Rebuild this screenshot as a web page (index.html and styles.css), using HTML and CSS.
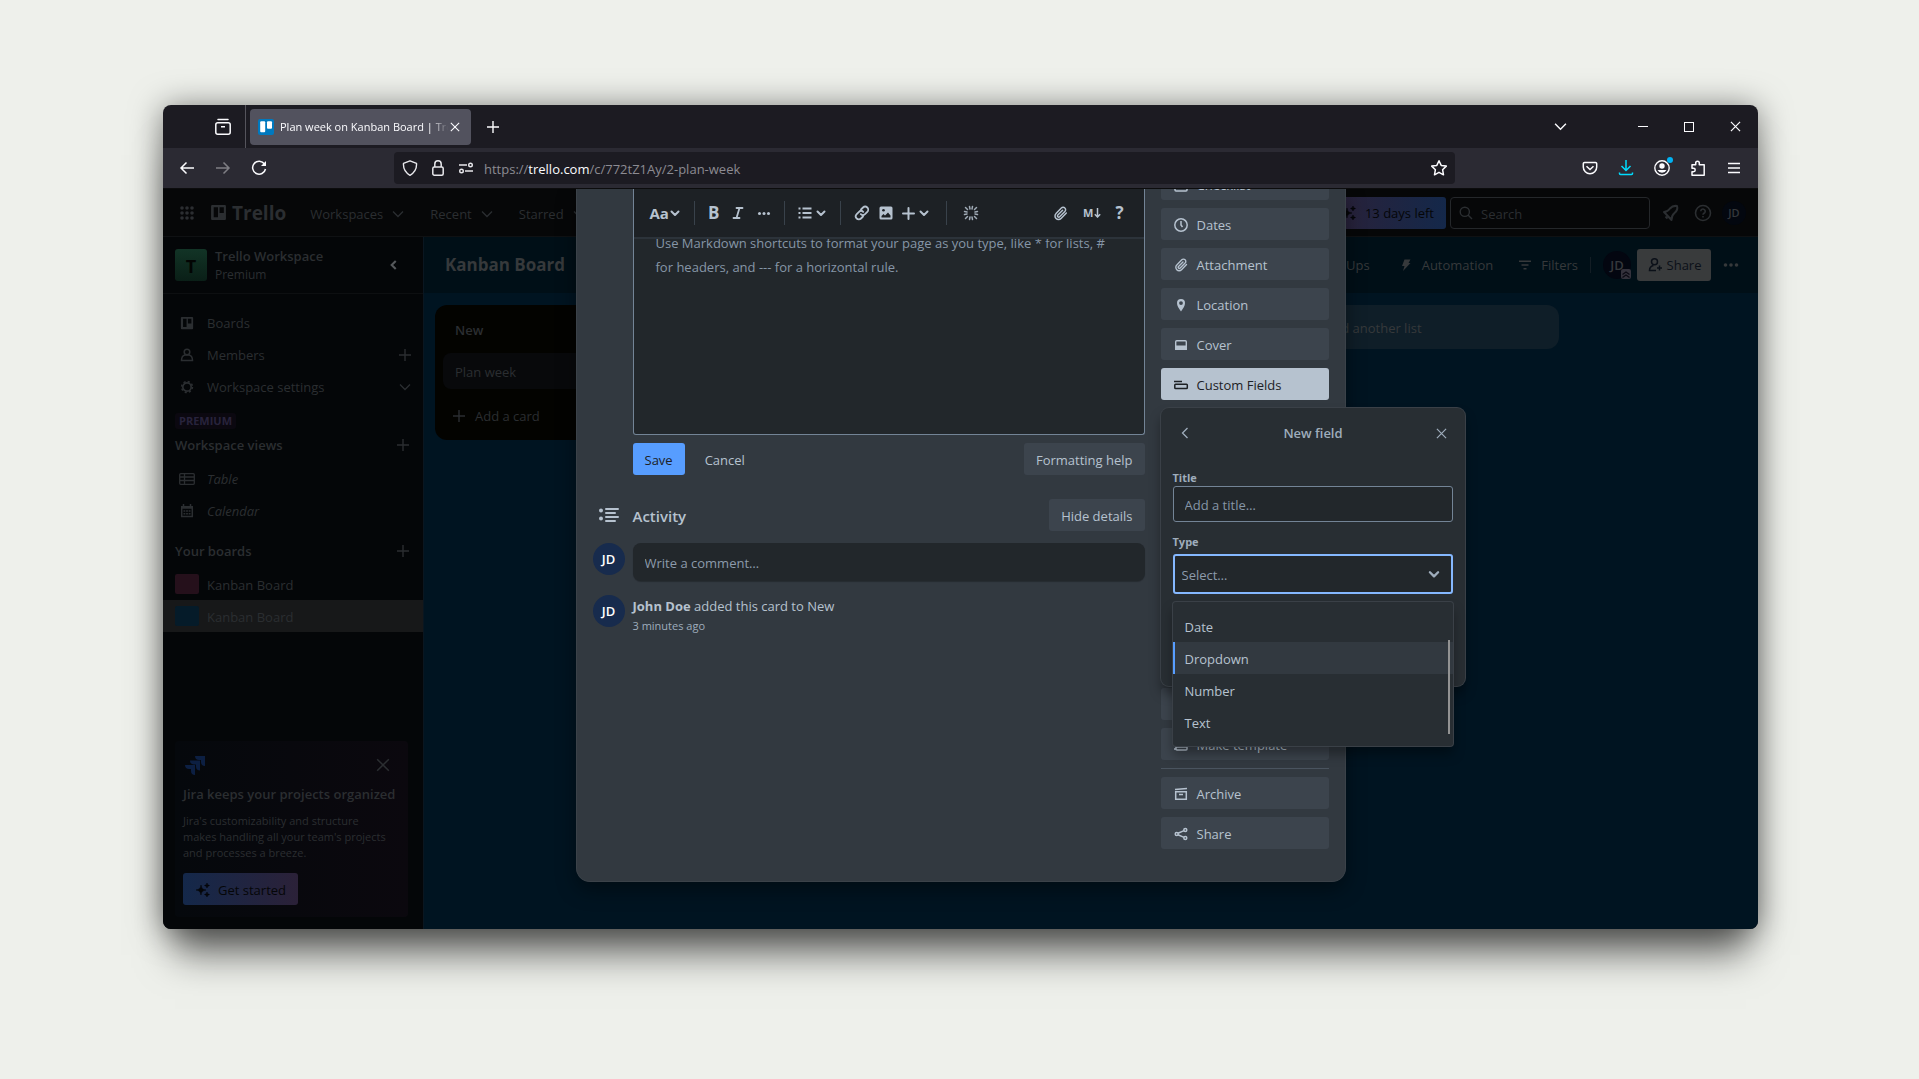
FILE: index.html
```html
<!DOCTYPE html>
<html lang="en">
<head>
  <meta charset="UTF-8">
  <meta name="viewport" content="width=device-width, initial-scale=1.0">
  <title>Plan week on Kanban Board | Trello</title>
  <link rel="stylesheet" href="styles.css">
</head>
<body>
  <svg class="sprite" aria-hidden="true">
    <symbol id="chevron" viewBox="0 0 12 12"><path d="M1 3.5l5 5 5-5" fill="none" stroke="currentColor" stroke-width="1.3"/></symbol>
    <symbol id="chevron-bold" viewBox="0 0 12 12"><path d="M2.500 4.500L6 8l3.500-3.500" fill="none" stroke="currentColor" stroke-width="2" stroke-linecap="round" stroke-linejoin="round"/></symbol>
    <symbol id="plus" viewBox="0 0 12 12"><path d="M6 0v12M0 6h12" fill="none" stroke="currentColor" stroke-width="1.400"/></symbol>
    <symbol id="cross" viewBox="0 0 12 12"><path d="M1 1l10 10M11 1L1 11" fill="none" stroke="currentColor" stroke-width="1.300"/></symbol>
    <symbol id="spark" viewBox="0 0 16 16"><path d="M6 3c.7 3.500 1.500 4.500 5 5-3.500.7-4.500 1.500-5 5-.7-3.500-1.500-4.500-5-5 3.500-.7 4.500-1.500 5-5zM12 1c.3 1.500.8 2 2.500 2.500C12.800 4 12.300 4.500 12 6c-.3-1.500-.8-2-2.500-2.500C11.200 3 11.700 2.500 12 1zM12 10c.3 1.500.8 2 2.500 2.500-1.700.5-2.200 1-2.500 2.500-.3-1.500-.8-2-2.500-2.500 1.700-.5 2.200-1 2.500-2.500z" fill="currentColor" stroke="currentColor" stroke-width=".5"/></symbol>
    <symbol id="board" viewBox="0 0 16 16"><path fill-rule="evenodd" d="M2 1h12a1 1 0 011 1v12a1 1 0 01-1 1H2a1 1 0 01-1-1V2a1 1 0 011-1zm1.500 2v9.500h4V3zm5.500 0v5.500h4V3z" fill="currentColor"/></symbol>
    <symbol id="clip" viewBox="0 0 16 16"><path d="M13.500 7.500l-5 5.200a3.300 3.300 0 01-4.700 0 3.300 3.300 0 010-4.700l5-5.200a2.300 2.300 0 013.300 0 2.300 2.300 0 010 3.300l-4.900 5a1.200 1.200 0 01-1.700 0 1.200 1.200 0 010-1.700L10 4.900" fill="none" stroke="currentColor" stroke-width="1.400" stroke-linecap="round"/></symbol>
  </svg>

  <div class="window">
    <div class="tab-strip">
      <button class="tool recent-tabs" aria-label="View recent tabs">
        <svg width="18" height="18" viewBox="0 0 18 18" fill="none" stroke="currentColor" stroke-width="1.500"><path d="M4 1.500h10" stroke-linecap="round"/><rect x="1.800" y="4.700" width="14.400" height="11.500" rx="2"/><path d="M7 8.700h4"/></svg>
      </button>
      <div class="tab">
        <svg width="16" height="16" viewBox="0 0 16 16"><rect width="16" height="16" rx="2" fill="#0079bf"/><rect x="2.200" y="2.200" width="5" height="11" rx="1" fill="#fff"/><rect x="9" y="2.200" width="5" height="7.500" rx="1" fill="#fff"/></svg>
        <span class="tab-title">Plan week on Kanban Board | Trello</span>
        <button class="tool" aria-label="Close tab"><svg width="10" height="10"><use href="#cross"/></svg></button>
      </div>
      <button class="tool new-tab" aria-label="New tab"><svg width="12" height="12"><use href="#plus"/></svg></button>
      <div class="window-controls">
        <button class="tool list-tabs" aria-label="List all tabs"><svg width="13" height="13"><use href="#chevron"/></svg></button>
        <button class="tool" aria-label="Minimize"><svg width="10" height="10" viewBox="0 0 10 10"><path d="M0 4.500h10" stroke="currentColor"/></svg></button>
        <button class="tool" aria-label="Maximize"><svg width="10" height="10" viewBox="0 0 10 10"><rect x=".5" y=".5" width="9" height="9" fill="none" stroke="currentColor"/></svg></button>
        <button class="tool" aria-label="Close"><svg width="11" height="11"><use href="#cross"/></svg></button>
      </div>
    </div>

    <div class="nav-bar">
      <div class="nav-buttons">
        <button class="tool" aria-label="Back"><svg width="16" height="16" viewBox="0 0 16 16" fill="none" stroke="currentColor" stroke-width="1.500"><path d="M15 8H2M7.500 2.500L2 8l5.500 5.500"/></svg></button>
        <button class="tool dim" aria-label="Forward"><svg width="16" height="16" viewBox="0 0 16 16" fill="none" stroke="currentColor" stroke-width="1.500"><path d="M1 8h13M8.500 2.500L14 8l-5.500 5.500"/></svg></button>
        <button class="tool" aria-label="Reload"><svg width="16" height="16" viewBox="0 0 16 16" fill="none" stroke="currentColor" stroke-width="1.500"><path d="M13.500 4A6.500 6.500 0 1014.500 9"/><path d="M15 1v5h-5z" fill="currentColor" stroke="none"/></svg></button>
      </div>
      <div class="url-bar">
        <svg width="16" height="16" viewBox="0 0 16 16" fill="none" stroke="currentColor" stroke-width="1.400"><path d="M8 .8l6.500 2.500c.4 5-1.500 9-6.500 12C3 12.300 1.100 8.300 1.500 3.300z" stroke-linejoin="round"/></svg>
        <svg width="16" height="16" viewBox="0 0 16 16" fill="none" stroke="currentColor" stroke-width="1.500"><rect x="2.800" y="7" width="10.400" height="8.200" rx="1.500"/><path d="M4.800 7V4a3.200 3.200 0 016.400 0v3"/></svg>
        <svg width="16" height="16" viewBox="0 0 16 16" fill="none" stroke="currentColor" stroke-width="1.400"><path d="M1 5h8M7 11h8"/><circle cx="12.500" cy="5" r="1.800"/><circle cx="3.500" cy="11" r="1.800"/></svg>
        <span class="url">https://<b>trello.com</b>/c/772tZ1Ay/2-plan-week</span>
        <button class="tool" aria-label="Bookmark this page"><svg width="18" height="18" viewBox="0 0 18 18" fill="none" stroke="currentColor" stroke-width="1.500" stroke-linejoin="round"><path d="M9 1.700l2.200 4.700 5.100.7-3.700 3.600.9 5.100L9 13.300l-4.500 2.500.9-5.100-3.700-3.600 5.100-.7z"/></svg></button>
      </div>
      <div class="nav-tools">
        <button class="tool" aria-label="Save to Pocket"><svg width="16" height="16" viewBox="0 0 16 16" fill="none" stroke="currentColor" stroke-width="1.500"><path d="M2.500 2.500h11a1.200 1.200 0 011.200 1.200V7a6.700 6.700 0 01-13.400 0V3.700a1.200 1.200 0 011.200-1.200z"/><path d="M4.500 6.200L8 9.500l3.500-3.300"/></svg></button>
        <button class="tool cyan" aria-label="Downloads"><svg width="16" height="16" viewBox="0 0 16 16" fill="none" stroke="currentColor" stroke-width="1.500"><path d="M8 0v10.500M3.500 6L8 10.500 12.500 6M1.500 12.500v1a1 1 0 001 1h11a1 1 0 001-1v-1"/></svg></button>
        <button class="tool account" aria-label="Account"><svg width="16" height="16" viewBox="0 0 16 16"><circle cx="8" cy="8" r="7.200" fill="none" stroke="currentColor" stroke-width="1.400"/><circle cx="8" cy="6" r="2.700" fill="currentColor"/><path d="M3.500 10h9a5 5 0 01-9 0z" fill="currentColor"/></svg></button>
        <button class="tool" aria-label="Extensions"><svg width="16" height="16" viewBox="0 0 16 16" fill="none" stroke="currentColor" stroke-width="1.500" stroke-linejoin="round"><path d="M2 4.800h3.700V3a1.800 1.800 0 013.600 0v1.800h4.900v10.400H2v-3.500h1.500a1.700 1.700 0 000-3.400H2z"/></svg></button>
        <button class="tool" aria-label="Menu"><svg width="12" height="12" viewBox="0 0 12 12"><path d="M0 1.500h12M0 6h12M0 10.500h12" stroke="currentColor" stroke-width="1.400"/></svg></button>
      </div>
    </div>

    <div class="page">
      <header class="app-header">
        <svg width="14" height="14" viewBox="0 0 14 14" fill="currentColor"><circle cx="2" cy="2" r="1.800"/><circle cx="7" cy="2" r="1.800"/><circle cx="12" cy="2" r="1.800"/><circle cx="2" cy="7" r="1.800"/><circle cx="7" cy="7" r="1.800"/><circle cx="12" cy="7" r="1.800"/><circle cx="2" cy="12" r="1.800"/><circle cx="7" cy="12" r="1.800"/><circle cx="12" cy="12" r="1.800"/></svg>
        <a class="logo" href="#"><svg width="17" height="17"><use href="#board"/></svg>Trello</a>
        <nav class="app-nav">
          <button>Workspaces <svg width="12" height="12"><use href="#chevron"/></svg></button>
          <button>Recent <svg width="12" height="12"><use href="#chevron"/></svg></button>
          <button>Starred <svg width="12" height="12"><use href="#chevron"/></svg></button>
        </nav>
        <div class="app-tools">
          <button class="trial"><svg width="16" height="16"><use href="#spark"/></svg>13 days left</button>
          <label class="search">
            <svg width="14" height="14" viewBox="0 0 14 14" fill="none" stroke="currentColor" stroke-width="1.400"><circle cx="5.800" cy="5.800" r="4.600"/><path d="M9 9l4 4"/></svg>
            <input type="search" placeholder="Search" aria-label="Search">
          </label>
          <button aria-label="Notifications"><svg width="18" height="18" viewBox="0 0 18 18" fill="none" stroke="currentColor" stroke-width="2" stroke-linejoin="round"><path d="M2 8c3 0 4-1 6-3.500 2-2.300 4-3 7-2.500 1 3 0 5-2.500 7S9.500 12.500 9.500 16z"/><path d="M3.500 12.500l2 2"/></svg></button>
          <button aria-label="Help"><svg width="18" height="18" viewBox="0 0 18 18" fill="none" stroke="currentColor" stroke-width="1.600"><circle cx="9" cy="9" r="7.500"/><path d="M6.800 7.200a2.200 2.200 0 114 1.300c-.7.900-1.800 1-1.800 2.300M9 12v1.600"/></svg></button>
          <span class="avatar small">JD</span>
        </div>
      </header>

      <div class="workspace">
        <aside class="sidebar">
          <div class="space">
            <span class="space-logo">T</span>
            <div class="space-name"><b>Trello Workspace</b><span>Premium</span></div>
            <button class="collapse" aria-label="Collapse sidebar"><svg width="14" height="14" viewBox="0 0 12 12"><path d="M7.500 2.500L4 6l3.500 3.500" fill="none" stroke="currentColor" stroke-width="1.800"/></svg></button>
          </div>
          <ul class="links">
            <li><svg width="14" height="14"><use href="#board"/></svg><a href="#">Boards</a></li>
            <li><svg width="14" height="14" viewBox="0 0 14 14" fill="none" stroke="currentColor" stroke-width="1.500"><circle cx="7" cy="4" r="2.800"/><path d="M1.500 12.500c0-3 1.500-5 3.500-5.500h4c2 .5 3.500 2.500 3.500 5.500z"/></svg><a href="#">Members</a><svg width="12" height="12"><use href="#plus"/></svg></li>
            <li><svg width="14" height="14" viewBox="0 0 14 14" fill="none" stroke="currentColor"><circle cx="7" cy="7" r="4.200" stroke-width="1.700"/><circle cx="7" cy="7" r="5.400" stroke-width="1.600" stroke-dasharray="2.120 2.120"/></svg><a href="#">Workspace settings</a><svg width="12" height="12"><use href="#chevron"/></svg></li>
          </ul>
          <span class="premium">PREMIUM</span>
          <h3>Workspace views <svg width="12" height="12"><use href="#plus"/></svg></h3>
          <ul class="links views">
            <li><svg width="16" height="12" viewBox="0 0 16 12" fill="none" stroke="currentColor" stroke-width="1.300"><rect x=".7" y=".7" width="14.600" height="10.600" rx="1"/><path d="M1 4h14M1 7.500h14M5.500 1v10"/></svg><a href="#">Table</a></li>
            <li><svg width="14" height="14" viewBox="0 0 14 14" fill="none" stroke="currentColor" stroke-width="1.500"><path d="M1.700 4h10.600v8.500H1.700zM1 2.700h12M3.500 0v3M10.500 0v3"/><path d="M3.500 7h7M3.500 9.800h7" stroke-dasharray="1.800 .8"/></svg><a href="#">Calendar</a></li>
          </ul>
          <h3 class="boards-title">Your boards <svg width="12" height="12"><use href="#plus"/></svg></h3>
          <ul class="links boards">
            <li><i class="swatch pink"></i><a href="#">Kanban Board</a></li>
            <li class="current"><i class="swatch blue"></i><a href="#">Kanban Board</a></li>
          </ul>
          <section class="promo">
            <div class="promo-head">
              <svg width="20" height="20" viewBox="0 0 20 20" fill="currentColor"><path d="M10 1h10v10c-2.500 0-4-1.500-4-4V5h-2c-2.500 0-4-1.500-4-4z"/><path d="M5 5.500h10v10c-2.500 0-4-1.500-4-4v-2H9c-2.500 0-4-1.500-4-4z"/><path d="M0 10h10v10c-2.500 0-4-1.500-4-4v-2H4c-2.500 0-4-1.500-4-4z"/></svg>
              <button aria-label="Dismiss"><svg width="14" height="14"><use href="#cross"/></svg></button>
            </div>
            <h4>Jira keeps your projects organized</h4>
            <p>Jira's customizability and structure makes handling all your team's projects and processes a breeze.</p>
            <button class="start"><svg width="16" height="16"><use href="#spark"/></svg>Get started</button>
          </section>
        </aside>

        <main class="board">
          <div class="board-header">
            <h1>Kanban Board</h1>
            <div class="board-tools">
              <button class="power-ups">Power-Ups</button>
              <button><svg width="16" height="16" viewBox="0 0 16 16" fill="currentColor"><path d="M6.500 2.500h6L10.500 6h2L5 14l1.500-5H4z"/></svg>Automation</button>
              <button><svg width="16" height="16" viewBox="0 0 16 16" stroke="currentColor" stroke-width="1.500"><path d="M2 4.200h12M4.500 8h7M6.500 11.800h3"/></svg>Filters</button>
              <span class="divider"></span>
              <span class="avatar member">JD<svg width="10" height="10" viewBox="0 0 10 10"><rect width="10" height="10" rx="2" fill="#34323c"/><path d="M1.500 5.500L5 3l3.500 2.500M1.500 8.500L5 6l3.500 2.500" fill="none" stroke="#0b0a14" stroke-width="1.300"/></svg></span>
              <button class="share"><svg width="16" height="16" viewBox="0 0 16 16" fill="none" stroke="currentColor" stroke-width="1.500"><circle cx="7.500" cy="4.800" r="3"/><path d="M9 13.500H2.500c0-3 1.500-4.500 4-5M12.500 8.500v5M10 11h5"/></svg>Share</button>
              <button class="more" aria-label="Show menu"><svg width="16" height="16" viewBox="0 0 16 16" fill="currentColor"><circle cx="2.500" cy="8" r="1.800"/><circle cx="8" cy="8" r="1.800"/><circle cx="13.500" cy="8" r="1.800"/></svg></button>
            </div>
          </div>
          <div class="lists">
            <section class="list">
              <h2>New</h2>
              <a class="card" href="#">Plan week</a>
              <button class="add-card"><svg width="12" height="12"><use href="#plus"/></svg>Add a card</button>
            </section>
            <button class="add-list"><svg width="12" height="12"><use href="#plus"/></svg>Add another list</button>
          </div>
        </main>
      </div>

      <div class="overlay">
        <div class="modal" role="dialog" aria-label="Plan week">
          <div class="detail">
            <div class="editor">
              <div class="toolbar">
                <button class="fmt">Aa<svg width="12" height="12"><use href="#chevron-bold"/></svg></button>
                <i class="sep"></i>
                <div class="group">
                  <button class="bold" aria-label="Bold">B</button>
                  <button aria-label="Italic"><svg width="12" height="12" viewBox="0 0 12 12" fill="none" stroke="currentColor" stroke-width="1.800" stroke-linecap="round"><path d="M4.500 1h6M1.500 11h6M7.500 1l-3 10"/></svg></button>
                  <button aria-label="More formatting"><svg width="14" height="14" viewBox="0 0 14 14" fill="currentColor"><circle cx="2.500" cy="7.500" r="1.500"/><circle cx="7" cy="7.500" r="1.500"/><circle cx="11.500" cy="7.500" r="1.500"/></svg></button>
                </div>
                <i class="sep"></i>
                <button aria-label="Lists"><svg width="14" height="14" viewBox="0 0 14 14" stroke="currentColor" stroke-width="1.800"><path d="M.5 2.500h2M.5 7h2M.5 11.500h2M4.500 2.500h9M4.500 7h9M4.500 11.500h9"/></svg><svg width="12" height="12"><use href="#chevron-bold"/></svg></button>
                <i class="sep"></i>
                <div class="group tight">
                  <button aria-label="Link"><svg width="16" height="16" viewBox="0 0 16 16" fill="none" stroke="currentColor" stroke-width="1.800" stroke-linecap="round"><path d="M7 4.500l2-2a3 3 0 014.300 4.300l-2.300 2.400a3 3 0 01-4.200 0M9 11.500l-2 2a3 3 0 01-4.300-4.300L5 6.800a3 3 0 014.200 0"/></svg></button>
                  <button aria-label="Image"><svg width="14" height="14" viewBox="0 0 14 14"><rect x=".5" y=".5" width="13" height="13" rx="1.500" fill="currentColor"/><circle cx="4.500" cy="4.300" r="1.300" fill="#1d2125"/><path d="M2.500 11.500v-1.500l2-2 1.500 1.500L9 6.500l2.500 3v2z" fill="#1d2125"/></svg></button>
                  <button aria-label="Insert"><svg width="13" height="13" viewBox="0 0 13 13" stroke="currentColor" stroke-width="2" stroke-linecap="round"><path d="M6.500 1v11M1 6.500h11"/></svg><svg width="12" height="12"><use href="#chevron-bold"/></svg></button>
                </div>
                <i class="sep wide"></i>
                <button aria-label="Assist"><svg width="16" height="16" viewBox="0 0 16 16" stroke="currentColor" stroke-width="1.500" stroke-linecap="round" opacity=".85"><path d="M6.500 1.500l.5 2.500M9.500 1.500L9 4M14.500 6.500L12 7M14.500 9.500L12 9M9.500 14.500L9 12M6.500 14.500L7 12M1.500 9.500L4 9M1.500 6.500L4 7M2.500 2.500l2 2M13.500 2.500l-2 2M13.500 13.500l-2-2M2.500 13.500l2-2"/></svg></button>
                <div class="group end">
                  <button aria-label="Attach"><svg width="17" height="17"><use href="#clip"/></svg></button>
                  <button class="md" aria-label="Markdown">M<svg width="7" height="10" viewBox="0 0 7 10" fill="none" stroke="currentColor" stroke-width="1.500"><path d="M3.500 0v9M.8 6.200l2.700 2.800 2.700-2.800"/></svg></button>
                  <button class="bold" aria-label="Help">?</button>
                </div>
              </div>
              <p class="hint">Use Markdown shortcuts to format your page as you type, like * for lists, # for headers, and --- for a horizontal rule.</p>
            </div>
            <div class="actions">
              <button class="btn primary">Save</button>
              <button class="btn plain">Cancel</button>
              <button class="btn">Formatting help</button>
            </div>
            <div class="activity-head">
              <svg width="20" height="16" viewBox="0 0 20 16" stroke="currentColor" stroke-width="2" stroke-linecap="round"><path d="M7 2h12M7 6h9M7 10h12M7 14h9"/><g fill="currentColor" stroke="none"><circle cx="2" cy="3.500" r="2"/><circle cx="2" cy="11.500" r="2"/></g></svg>
              <h2>Activity</h2>
              <button class="btn">Hide details</button>
            </div>
            <div class="activity-row">
              <span class="avatar">JD</span>
              <input class="comment" type="text" placeholder="Write a comment…" aria-label="Write a comment">
            </div>
            <div class="activity-row">
              <span class="avatar">JD</span>
              <div class="event"><p><b>John Doe</b> added this card to New</p><a href="#">3 minutes ago</a></div>
            </div>
          </div>

          <div class="card-menu">
            <div class="menu-group top">
              <button class="btn side"><svg width="16" height="16" viewBox="0 0 16 16" fill="none" stroke="currentColor" stroke-width="1.500"><rect x="2" y="2" width="12" height="12" rx="1"/><path d="M5 8l2 2 4-4"/></svg>Checklist</button>
              <button class="btn side"><svg width="16" height="16" viewBox="0 0 16 16" fill="none" stroke="currentColor" stroke-width="1.500"><circle cx="8" cy="8" r="6.200"/><path d="M8 4v4l1.500 2"/></svg>Dates</button>
              <button class="btn side"><svg width="16" height="16"><use href="#clip"/></svg>Attachment</button>
              <button class="btn side"><svg width="16" height="16" viewBox="0 0 16 16" fill="currentColor"><path fill-rule="evenodd" d="M8 14.500C5.500 11 4 8.500 4 6a4 4 0 018 0c0 2.500-1.500 5-4 8.500zM8 8a1.900 1.900 0 100-3.800A1.900 1.900 0 008 8z"/></svg>Location</button>
              <button class="btn side"><svg width="16" height="16" viewBox="0 0 16 16"><rect x="2.700" y="3.700" width="10.600" height="8.600" rx="1" fill="none" stroke="currentColor" stroke-width="1.400"/><path d="M2 8.500h12V13H2z" fill="currentColor"/></svg>Cover</button>
              <div class="anchor">
                <button class="btn side active"><svg width="16" height="16" viewBox="0 0 16 16" fill="none" stroke="currentColor" stroke-width="1.500"><path d="M1 4.500h8"/><rect x="1.800" y="7.300" width="12.500" height="4.200" rx=".8"/></svg>Custom Fields</button>
                <div class="popover">
                  <div class="popover-head">
                    <button aria-label="Back"><svg width="12" height="12" viewBox="0 0 12 12"><path d="M8.500 1l-5 5 5 5" fill="none" stroke="currentColor" stroke-width="1.300"/></svg></button>
                    <h2>New field</h2>
                    <button aria-label="Close"><svg width="11" height="11"><use href="#cross"/></svg></button>
                  </div>
                  <label for="field-title">Title</label>
                  <input id="field-title" type="text" placeholder="Add a title…">
                  <label for="field-type">Type</label>
                  <div class="select">
                    <select id="field-type"><option>Select…</option></select>
                    <svg width="14" height="14"><use href="#chevron-bold"/></svg>
                    <ul class="options" role="listbox">
                      <li role="option">Date</li>
                      <li role="option" class="focused">Dropdown</li>
                      <li role="option">Number</li>
                      <li role="option">Text</li>
                    </ul>
                  </div>
                </div>
              </div>
            </div>
            <div class="menu-group">
              <button class="btn side" aria-label="Copy"></button>
              <button class="btn side"><svg width="16" height="16" viewBox="0 0 16 16" fill="none" stroke="currentColor" stroke-width="1.500"><rect x="3" y="3" width="11" height="10" rx="1"/><path d="M3 10h11M1 12h2"/></svg>Make template</button>
              <hr>
              <button class="btn side"><svg width="16" height="16" viewBox="0 0 16 16" fill="none" stroke="currentColor" stroke-width="1.500"><path d="M2 3.500l12-1M2.700 5.700h10.600v7.600H2.700zM6 8.500h4"/></svg>Archive</button>
              <button class="btn side"><svg width="16" height="16" viewBox="0 0 16 16" fill="none" stroke="currentColor" stroke-width="1.500"><circle cx="12.300" cy="4" r="1.500"/><circle cx="12.300" cy="12" r="1.500"/><circle cx="3.700" cy="8" r="1.500"/><path d="M5 7.300l6-2.700M5 8.700l6 2.700"/></svg>Share</button>
            </div>
          </div>
        </div>
      </div>
    </div>
  </div>
</body>
</html>
```

FILE: styles.css
```css
* {
  box-sizing: border-box;
}
body {
  margin: 0;
  height: 100vh;
  min-height: 1000px;
  padding: 105px 161px 150px 163px;
  background-color: #eef0eb;
  font-family: "Open Sans", "Noto Sans", sans-serif;
  font-size: 13px;
  line-height: 20px;
}
h1, h2, h3, h4, p, ul {
  margin: 0;
  padding: 0;
}
ul {
  list-style: none;
}
a {
  color: inherit;
  text-decoration: none;
}
button, input, select {
  font: inherit;
  color: inherit;
}
button {
  display: flex;
  align-items: center;
  padding: 0;
  border: none;
  background: none;
  cursor: pointer;
}
svg {
  flex-shrink: 0;
}
.sprite {
  display: none;
}

/* browser window */
.window {
  display: flex;
  flex-direction: column;
  height: 100%;
  border-radius: 8px;
  overflow: hidden;
  background-color: #1c1b22;
  box-shadow: 0 2px 32px rgba(0,0,0,0.5), 0 38px 36px -12px rgba(0,0,0,0.5);
}
.tool {
  justify-content: center;
  color: #fbfbfe;
}
.tab-strip {
  display: flex;
  align-items: center;
  height: 43px;
}
.recent-tabs {
  width: 83px;
  height: 100%;
  padding-left: 37px;
  border-right: 1px solid #55545c;
}
.tab {
  display: flex;
  align-items: center;
  gap: 6px;
  width: 221px;
  height: 36px;
  margin-left: 4px;
  padding: 0 11px 0 8px;
  border-radius: 4px;
  background-color: #52525e;
  color: #fbfbfe;
  font-size: 11px;
}
.tab-title {
  flex: 1;
  margin-right: -4px;
  white-space: nowrap;
  overflow: hidden;
  -webkit-mask-image: linear-gradient(to right, #000 90%, transparent);
  mask-image: linear-gradient(to right, #000 90%, transparent);
}
.new-tab {
  margin-left: 16px;
}
.window-controls {
  display: flex;
  margin-left: auto;
}
.window-controls .tool {
  width: 46px;
  height: 40px;
}
.window-controls .list-tabs {
  margin-right: 37px;
}
.nav-bar {
  display: flex;
  align-items: center;
  height: 41px;
  background-color: #2b2a33;
  border-bottom: 1px solid #0c0c0d;
}
.nav-buttons {
  display: flex;
  width: 231px;
  padding-left: 6px;
}
.nav-buttons .tool {
  width: 36px;
}
.dim {
  opacity: 0.4;
}
.url-bar {
  display: flex;
  align-items: center;
  gap: 12px;
  flex: 1;
  height: 32px;
  padding: 0 7px 0 8px;
  border-radius: 4px;
  background-color: #1c1b22;
  color: #e8e8ec;
}
.url {
  flex: 1;
  margin-left: -2px;
  padding-top: 2px;
  color: #8c8b92;
}
.url b {
  color: #fbfbfe;
  font-weight: normal;
}
.nav-tools {
  display: flex;
  width: 303px;
  padding-right: 6px;
  justify-content: flex-end;
}
.nav-tools .tool {
  width: 36px;
}
.nav-tools .cyan {
  color: #00ddff;
}
.account {
  position: relative;
}
.account::after {
  content: "";
  position: absolute;
  top: -3px;
  right: 7px;
  width: 6px;
  height: 6px;
  border-radius: 50%;
  background-color: #00b3f4;
}

/* trello, dimmed behind the card */
.page {
  position: relative;
  flex: 1;
  display: flex;
  flex-direction: column;
  overflow: hidden;
  color: #2b2e31;
}
.app-header {
  display: flex;
  align-items: center;
  height: 48px;
  padding: 0 12px 0 17px;
  background-color: #060708;
  border-bottom: 1px solid #0f1113;
}
.logo {
  display: flex;
  align-items: center;
  gap: 5px;
  margin-left: 16px;
  font-size: 19px;
  font-weight: bold;
}
.app-nav {
  display: flex;
  gap: 26px;
  margin-left: 24px;
}
.app-nav button {
  gap: 9px;
  padding-top: 2px;
}
.app-tools {
  display: flex;
  align-items: center;
  gap: 14px;
  margin-left: auto;
}
.trial {
  gap: 8px;
  height: 32px;
  padding: 0 12px;
  margin-right: -10px;
  border-radius: 3px;
  background: linear-gradient(to right, #2b2138, #14284a);
  color: #050608;
}
.search {
  display: flex;
  align-items: center;
  gap: 8px;
  width: 200px;
  height: 32px;
  padding: 0 8px;
  margin-right: -2px;
  border: 1px solid #24272a;
  border-radius: 4px;
}
.search input {
  width: 100%;
  padding: 2px 0 0;
  border: none;
  outline: none;
  background: none;
}
.search input::placeholder {
  color: #2b2e31;
}
.avatar {
  display: flex;
  align-items: center;
  justify-content: center;
  flex-shrink: 0;
  width: 32px;
  height: 32px;
  border-radius: 50%;
  background-color: #172b4d;
  color: #fff;
  font-size: 13px;
  font-weight: 600;
}
.avatar.small {
  width: 24px;
  height: 24px;
  margin-left: -4px;
  background-color: #03070f;
  color: #35383c;
  font-size: 11px;
}
.workspace {
  display: flex;
  flex: 1;
}
.sidebar {
  display: flex;
  flex-direction: column;
  width: 261px;
  background-color: #040608;
  border-right: 1px solid #0a1620;
}
.space {
  display: flex;
  align-items: center;
  gap: 8px;
  height: 57px;
  padding: 0 22px 0 12px;
  border-bottom: 1px solid #0d0f11;
}
.space-logo {
  width: 32px;
  height: 32px;
  border-radius: 3px;
  background: linear-gradient(#123426, #0a1f17);
  color: #020403;
  font-size: 18px;
  font-weight: bold;
  line-height: 34px;
  text-align: center;
}
.space-name {
  flex: 1;
}
.space-name b {
  display: block;
  font-weight: 600;
}
.space-name span {
  display: block;
  font-size: 12px;
  line-height: 18px;
}
.collapse {
  color: #55585b;
}
.links {
  padding-top: 13px;
}
.links li {
  display: flex;
  align-items: center;
  gap: 13px;
  height: 32px;
  padding: 0 12px 0 17px;
}
.links a {
  flex: 1;
}
.premium {
  align-self: flex-start;
  margin: 10px 0 0 12px;
  padding: 0 4px;
  border-radius: 3px;
  background-color: #0b0810;
  color: #28233c;
  font-size: 11px;
  font-weight: bold;
  line-height: 16px;
}
.sidebar h3 {
  display: flex;
  align-items: center;
  justify-content: space-between;
  height: 32px;
  padding: 0 14px 0 12px;
  font-size: 13px;
  font-weight: 600;
}
.views {
  padding-top: 2px;
  font-style: italic;
}
.views li:first-child {
  gap: 12px;
  padding-left: 16px;
}
.sidebar .boards-title {
  margin-top: 8px;
}
.boards {
  padding-top: 1px;
}
.boards li {
  gap: 8px;
  padding-left: 12px;
}
.boards a {
  padding-top: 2px;
}
.boards .current {
  background-color: #171819;
}
.swatch {
  width: 24px;
  height: 20px;
  border-radius: 2px;
}
.pink {
  background-color: #25101b;
}
.blue {
  background-color: #051b29;
}
.promo {
  margin: auto 15px 12px 12px;
  padding: 12px 8px;
  border-radius: 4px;
  background: linear-gradient(to right, #05080c, #0b080e);
}
.promo-head {
  display: flex;
  align-items: center;
  justify-content: space-between;
  height: 24px;
  padding: 0 10px 0 2px;
  color: #0c1f42;
}
.promo-head button {
  color: #2b2e31;
}
.promo h4 {
  margin: 7px 0 9px;
  font-size: 13px;
  font-weight: 600;
  white-space: nowrap;
}
.promo p {
  padding-right: 6px;
  font-size: 11px;
  line-height: 16px;
}
.start {
  gap: 7px;
  height: 32px;
  margin-top: 12px;
  padding: 2px 12px 0;
  border-radius: 3px;
  background: linear-gradient(to right, #14284a, #2b2138);
  color: #050608;
}
.board {
  flex: 1;
  background-color: #001421;
}
.board-header {
  display: flex;
  align-items: center;
  justify-content: space-between;
  height: 56px;
  padding: 0 16px 0 21px;
  background-color: #000f17;
  color: #36393b;
}
.board-header h1 {
  font-size: 17px;
}
.board-tools {
  display: flex;
  align-items: center;
  gap: 24px;
}
.board-tools button {
  gap: 8px;
}
.power-ups {
  margin-right: 4px;
}
.divider {
  width: 1px;
  height: 16px;
  margin: 0 -12px;
  background-color: #131d24;
}
.avatar.member {
  position: relative;
  width: 28px;
  height: 28px;
  margin-right: -18px;
  background-color: #030610;
  color: #35383c;
}
.member svg {
  position: absolute;
  right: 0;
  bottom: 0;
}
.board-tools .share {
  height: 32px;
  gap: 4px;
  width: 74px;
  justify-content: center;
  border-radius: 3px;
  background-color: #393b3c;
  color: #0b1018;
}
.board-tools .more {
  margin: 0 3px 0 -12px;
}
.lists {
  display: grid;
  grid-template-columns: repeat(4, 272px);
  align-items: start;
  gap: 12px;
  padding: 12px 11px;
}
.list {
  padding: 8px;
  border-radius: 12px;
  background-color: #030300;
}
.list h2 {
  padding: 7px 12px;
  font-size: 13px;
  font-weight: 600;
  line-height: 20px;
}
.card {
  display: block;
  margin-top: 6px;
  padding: 9px 12px 7px;
  border-radius: 8px;
  background-color: #08090b;
}
.add-card {
  gap: 10px;
  height: 32px;
  margin-top: 11px;
  padding: 0 10px;
}
.add-list {
  grid-column: 4;
  gap: 14px;
  height: 44px;
  padding: 2px 12px 0;
  border-radius: 12px;
  background-color: #0f1e28;
  color: #36393b;
}

/* card dialog */
.overlay {
  position: absolute;
  inset: 0;
  display: flex;
  justify-content: center;
  padding-bottom: 47px;
}
.modal {
  display: flex;
  justify-content: space-between;
  width: 770px;
  max-width: 100%;
  padding: 0 16px 32px;
  border: solid #3b4249;
  border-width: 0 1px 1px;
  border-radius: 0 0 14px 14px;
  background-color: #323940;
  color: #b6c2cf;
  box-shadow: 0 8px 20px rgba(0,0,0,0.4);
}
.detail {
  width: 552px;
}
.editor {
  height: 246px;
  margin-left: 40px;
  border: 1px solid #738496;
  border-top: none;
  border-radius: 0 0 3px 3px;
  background-color: #22272b;
}
.toolbar {
  position: relative;
  display: flex;
  align-items: center;
  height: 50px;
  padding: 0 20px 0 16px;
  background-color: #1d2125;
  border-bottom: 2px solid #2c333a;
}
.fmt {
  font-size: 15px;
  font-weight: bold;
}
.sep {
  width: 1px;
  height: 24px;
  margin: 0 13px;
  background-color: #39424b;
}
.sep.wide {
  margin: 0 16px;
}
.group {
  display: flex;
  align-items: center;
  gap: 13px;
}
.group.tight {
  gap: 9px;
}
.group.end {
  margin-left: auto;
  gap: 14px;
}
.bold {
  font-size: 17px;
  font-weight: bold;
}
.toolbar button {
  gap: 3px;
}
.toolbar .fmt {
  gap: 0;
}
.toolbar .md {
  gap: 1px;
  font-size: 11px;
  font-weight: bold;
}
.hint {
  margin-top: -8px;
  padding: 0 20px 0 22px;
  color: #8696a7;
  line-height: 24px;
  font-variant-ligatures: none;
}
.btn {
  height: 32px;
  padding: 2px 12px 0;
  border-radius: 3px;
  background-color: #3c444d;
}
.primary {
  background-color: #579dff;
  color: #1d2125;
}
.plain {
  background: none;
}
.actions {
  display: flex;
  gap: 8px;
  margin: 8px 0 0 40px;
}
.actions .btn:last-child {
  margin-left: auto;
}
.activity-head {
  display: flex;
  align-items: center;
  margin: 24px 0 12px;
  padding-left: 6px;
}
.activity-head h2 {
  flex: 1;
  margin-left: 14px;
  padding-top: 2px;
  font-size: 15px;
  font-weight: 600;
}
.activity-row {
  display: flex;
  gap: 8px;
  margin-bottom: 14px;
}
.comment {
  flex: 1;
  height: 38px;
  padding: 1px 12px 0;
  border: none;
  border-radius: 8px;
  background-color: #22272b;
  box-shadow: 0 1px 1px rgba(0,0,0,0.25);
}
.comment::placeholder {
  color: #8c9bab;
}
.event {
  padding-top: 1px;
}
.event a {
  display: block;
  font-size: 11px;
  color: #9fadbc;
}
.card-menu {
  display: flex;
  flex-direction: column;
  justify-content: space-between;
  width: 168px;
}
.menu-group {
  display: flex;
  flex-direction: column;
  gap: 8px;
}
.menu-group.top {
  margin-top: -21px;
}
.menu-group hr {
  width: 100%;
  margin: 0;
  border: none;
  border-top: 1px solid #4a545f;
}
.side {
  gap: 8px;
  width: 100%;
}
.active {
  background-color: #b6c2cf;
  color: #1d2125;
}
.anchor {
  position: relative;
}

/* custom field popover */
.popover {
  position: absolute;
  top: 40px;
  left: 0;
  z-index: 2;
  width: 304px;
  height: 278px;
  padding: 0 12px;
  border-radius: 8px;
  background-color: #282e33;
  box-shadow: 0 0 0 1px #3a4047, 0 8px 12px rgba(0,0,0,0.36);
}
.popover-head {
  display: flex;
  align-items: center;
  justify-content: space-between;
  height: 50px;
  padding: 0 6px;
  color: #9fadbc;
}
.popover-head h2 {
  font-size: 13px;
  font-weight: 600;
}
.popover label {
  display: block;
  margin-top: 12px;
  color: #9fadbc;
  font-size: 11px;
  font-weight: bold;
  line-height: 16px;
}
.popover input {
  display: block;
  width: 100%;
  height: 36px;
  padding: 2px 11px 0;
  border: 1px solid #738496;
  border-radius: 3px;
  background-color: #22272b;
}
.popover input::placeholder {
  color: #8696a7;
}
.select {
  position: relative;
  margin-top: 4px;
}
.select select {
  width: 100%;
  height: 40px;
  padding: 1px 7px 0;
  border: 2px solid #85b8ff;
  border-radius: 3px;
  background-color: #22272b;
  color: #8c9bab;
  appearance: none;
  outline: none;
}
.select > svg {
  position: absolute;
  top: 13px;
  right: 12px;
  color: #9fadbc;
}
.options {
  position: absolute;
  top: 48px;
  left: 0;
  width: 100%;
  padding: 8px 0;
  border-radius: 3px;
  background-color: #282e33;
  box-shadow: 0 0 0 1px #3a4047, 0 8px 12px rgba(0,0,0,0.36);
}
.options li {
  padding: 7px 12px 5px;
}
.options .focused {
  padding-left: 10px;
  border-left: 2px solid #579dff;
  background-color: #323940;
}
/* thin scroll thumb */
.options::after {
  content: "";
  position: absolute;
  top: 38px;
  right: 3px;
  bottom: 12px;
  width: 2px;
  background-color: #939393;
}
```
